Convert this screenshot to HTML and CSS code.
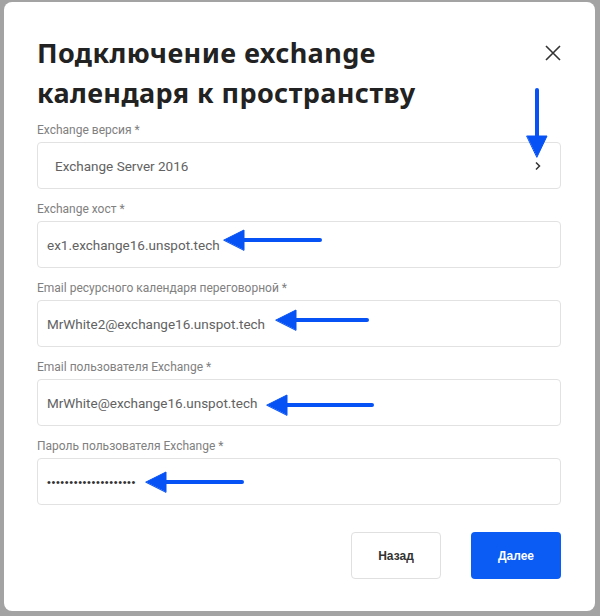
FILE: index.html
```html
<!DOCTYPE html>
<html lang="ru">
<head>
    <meta charset="UTF-8">
    <meta name="viewport" content="width=device-width, initial-scale=1.0">
    <title>Подключение exchange календаря</title>
    <link rel="stylesheet" href="styles.css">
</head>
<body>
    <div class="modal">
        <div class="modal-header">
            <h1>Подключение exchange<br>календаря к пространству</h1>
            <button class="close-btn" type="button" aria-label="Закрыть">
                <svg width="16" height="16" viewBox="0 0 16 16">
                    <path d="M1 1L15 15M15 1L1 15" stroke="#333" stroke-width="1.6" fill="none"/>
                </svg>
            </button>
        </div>

        <form class="form">
            <div class="field">
                <label>Exchange версия *</label>
                <div class="input select">
                    <span>Exchange Server 2016</span>
                    <svg width="8" height="10" viewBox="0 0 8 10">
                        <path d="M2 1.5L5.5 5L2 8.5" stroke="#333" stroke-width="1.5" fill="none"/>
                    </svg>
                </div>
            </div>
            <div class="field">
                <label>Exchange хост *</label>
                <div class="input">ex1.exchange16.unspot.tech</div>
            </div>
            <div class="field">
                <label>Email ресурсного календаря переговорной *</label>
                <div class="input">MrWhite2@exchange16.unspot.tech</div>
            </div>
            <div class="field">
                <label>Email пользователя Exchange *</label>
                <div class="input">MrWhite@exchange16.unspot.tech</div>
            </div>
            <div class="field">
                <label>Пароль пользователя Exchange *</label>
                <div class="input password">••••••••••••••••••••</div>
            </div>

            <div class="actions">
                <button type="button" class="btn btn-back">Назад</button>
                <button type="button" class="btn btn-next">Далее</button>
            </div>
        </form>
    </div>

    <!-- annotation arrows drawn over the screenshot -->
    <svg class="arrows" width="600" height="616" viewBox="0 0 600 616">
        <g stroke="#0652f5" stroke-width="4" stroke-linecap="round" fill="#0652f5">
            <line x1="537" y1="90" x2="537" y2="138"/>
            <path d="M527 136L547 136L537 157Z" stroke-width="1" stroke-linejoin="round"/>

            <line x1="242" y1="240" x2="320" y2="240"/>
            <path d="M224 240L244 230L244 250Z" stroke-width="1" stroke-linejoin="round"/>

            <line x1="294" y1="320" x2="367" y2="320"/>
            <path d="M276 320L296 310L296 330Z" stroke-width="1" stroke-linejoin="round"/>

            <line x1="285" y1="405" x2="372" y2="405"/>
            <path d="M267 405L287 395L287 415Z" stroke-width="1" stroke-linejoin="round"/>

            <line x1="164" y1="482" x2="242" y2="482"/>
            <path d="M146 482L166 472L166 492Z" stroke-width="1" stroke-linejoin="round"/>
        </g>
    </svg>
</body>
</html>
```

FILE: styles.css
```css
body {
    margin: 0;
    height: 616px;
    background-color: #a3a3a3;
    font-family: Roboto, "Liberation Sans", sans-serif;
    position: relative;
    overflow: hidden;
}

.modal {
    margin: 2px 5px 0 4px;
    height: 609px;
    box-sizing: border-box;
    background-color: #ffffff;
    border-radius: 8px;
    padding: 31px 34px 0 33px;
}

.modal-header {
    display: flex;
    justify-content: space-between;
    align-items: flex-start;
}

h1 {
    margin: 0;
    font-family: "Noto Sans", sans-serif;
    font-size: 27px;
    line-height: 40px;
    font-weight: 700;
    color: #222;
    letter-spacing: 0.4px;
}

.close-btn {
    background: none;
    border: none;
    padding: 0;
    margin: 12px 0 0 0;
    width: 16px;
    height: 16px;
    cursor: pointer;
}

.form {
    margin-top: 9px;
}

.field {
    display: flex;
    flex-direction: column;
    margin-bottom: 12px;
}

label {
    font-size: 12px;
    line-height: 16px;
    color: #808080;
    margin-bottom: 4px;
}

.input {
    height: 47px;
    box-sizing: border-box;
    border: 1px solid #e2e2e2;
    border-radius: 4px;
    padding: 0 9px;
    display: flex;
    align-items: center;
    font-size: 13.5px;
    color: #626262;
}

.select {
    padding: 0 18px 0 17px;
    justify-content: space-between;
}

.password {
    font-family: "Liberation Sans", Arial, sans-serif;
    font-size: 11px;
    letter-spacing: 0.6px;
    color: #333;
}

.actions {
    display: flex;
    justify-content: flex-end;
    gap: 30px;
    margin-top: 27px;
}

.btn {
    width: 90px;
    height: 47px;
    border-radius: 4px;
    font-family: "Liberation Sans", Arial, sans-serif;
    font-size: 12px;
    font-weight: 700;
    cursor: pointer;
}

.btn-back {
    background-color: #fff;
    border: 1px solid #e0e0e0;
    color: #333;
}

.btn-next {
    background-color: #0a5cf5;
    border: none;
    color: #fff;
}

.arrows {
    position: absolute;
    top: 0;
    left: 0;
    pointer-events: none;
}
```
